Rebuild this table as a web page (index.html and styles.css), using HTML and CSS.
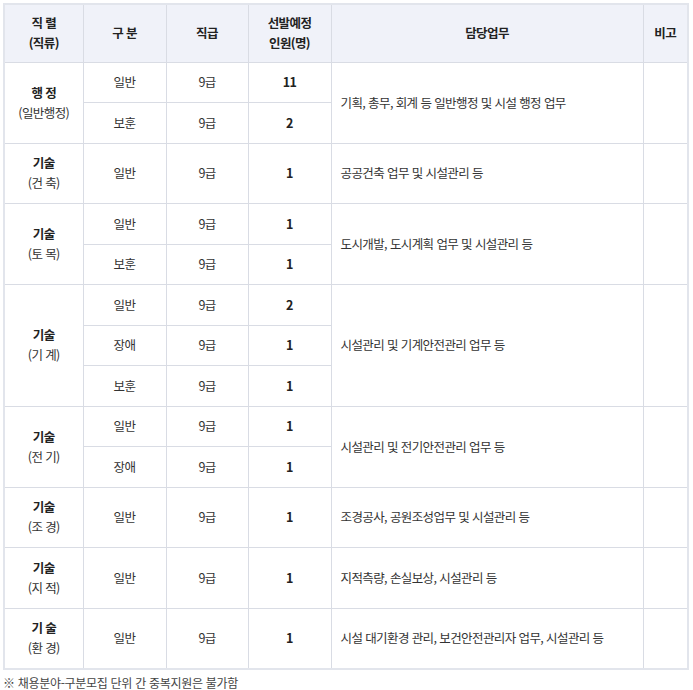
FILE: index.html
```html
<!DOCTYPE html>
<html lang="ko">
<head>
<meta charset="utf-8">
<link rel="stylesheet" href="styles.css">
</head>
<body>
<div class="wrap">
<table class="tbl">
  <colgroup>
    <col class="c1"><col class="c2"><col class="c3"><col class="c4"><col class="c5"><col class="c6">
  </colgroup>
  <thead>
    <tr class="head">
      <th>직 렬<br>(직류)</th>
      <th>구 분</th>
      <th>직급</th>
      <th>선발예정<br>인원(명)</th>
      <th>담당업무</th>
      <th>비고</th>
    </tr>
  </thead>
  <tbody>
    <tr class="sub">
      <td rowspan="2" class="grp"><b>행 정</b><br>(일반행정)</td>
      <td>일반</td><td>9급</td><td class="num">11</td>
      <td rowspan="2" class="task">기획, 총무, 회계 등 일반행정 및 시설 행정 업무</td>
      <td rowspan="2"></td>
    </tr>
    <tr class="sub">
      <td>보훈</td><td>9급</td><td class="num">2</td>
    </tr>

    <tr class="single">
      <td class="grp"><b>기술</b><br>(건 축)</td>
      <td>일반</td><td>9급</td><td class="num">1</td>
      <td class="task">공공건축 업무 및 시설관리 등</td>
      <td></td>
    </tr>

    <tr class="sub">
      <td rowspan="2" class="grp"><b>기술</b><br>(토 목)</td>
      <td>일반</td><td>9급</td><td class="num">1</td>
      <td rowspan="2" class="task">도시개발, 도시계획 업무 및 시설관리 등</td>
      <td rowspan="2"></td>
    </tr>
    <tr class="sub">
      <td>보훈</td><td>9급</td><td class="num">1</td>
    </tr>

    <tr class="sub">
      <td rowspan="3" class="grp"><b>기술</b><br>(기 계)</td>
      <td>일반</td><td>9급</td><td class="num">2</td>
      <td rowspan="3" class="task">시설관리 및 기계안전관리 업무 등</td>
      <td rowspan="3"></td>
    </tr>
    <tr class="sub">
      <td>장애</td><td>9급</td><td class="num">1</td>
    </tr>
    <tr class="sub">
      <td>보훈</td><td>9급</td><td class="num">1</td>
    </tr>

    <tr class="sub">
      <td rowspan="2" class="grp"><b>기술</b><br>(전 기)</td>
      <td>일반</td><td>9급</td><td class="num">1</td>
      <td rowspan="2" class="task">시설관리 및 전기안전관리 업무 등</td>
      <td rowspan="2"></td>
    </tr>
    <tr class="sub">
      <td>장애</td><td>9급</td><td class="num">1</td>
    </tr>

    <tr class="single">
      <td class="grp"><b>기술</b><br>(조 경)</td>
      <td>일반</td><td>9급</td><td class="num">1</td>
      <td class="task">조경공사, 공원조성업무 및 시설관리 등</td>
      <td></td>
    </tr>

    <tr class="single">
      <td class="grp"><b>기술</b><br>(지 적)</td>
      <td>일반</td><td>9급</td><td class="num">1</td>
      <td class="task">지적측량, 손실보상, 시설관리 등</td>
      <td></td>
    </tr>

    <tr class="single">
      <td class="grp"><b>기 술</b><br>(환 경)</td>
      <td>일반</td><td>9급</td><td class="num">1</td>
      <td class="task">시설 대기환경 관리, 보건안전관리자 업무, 시설관리 등</td>
      <td></td>
    </tr>
  </tbody>
</table>
<p class="note">※ 채용분야-구분모집 단위 간 중복지원은 불가함</p>
</div>
</body>
</html>
```

FILE: styles.css
```css
html, body {
  margin: 0;
  padding: 0;
  background: #ffffff;
}
body {
  font-family: "Noto Sans CJK KR", "Noto Sans", sans-serif;
  color: #333333;
  font-size: 12.5px;
}
.wrap {
  padding: 3px 5px 0 3px;
}
.tbl {
  width: 684px;
  border-collapse: collapse;
  table-layout: fixed;
  border: 2px solid #e2e5ec;
  letter-spacing: -0.6px;
}
.c1 { width: 79px; }
.c2 { width: 83px; }
.c3 { width: 82px; }
.c4 { width: 83px; }
.c5 { width: 312px; }
.c6 { width: 45px; }
.tbl th, .tbl td {
  border: 1px solid #d9dce4;
  text-align: center;
  vertical-align: middle;
  padding: 0 4px;
  line-height: 20px;
}
.tbl th {
  background: #f0f2f9;
  font-weight: 700;
  color: #222222;
}
.head { height: 58px; }
.sub { height: 40.5px; }
.single { height: 60.5px; }
.grp b {
  font-weight: 700;
  color: #222222;
}
.num {
  font-weight: 700;
  color: #222222;
}
.tbl td.task {
  text-align: left;
  padding-left: 9px;
}
.note {
  margin: 6px 0 0 0;
  font-size: 12px;
  color: #444444;
  line-height: 14px;
  letter-spacing: -0.3px;
}
```
